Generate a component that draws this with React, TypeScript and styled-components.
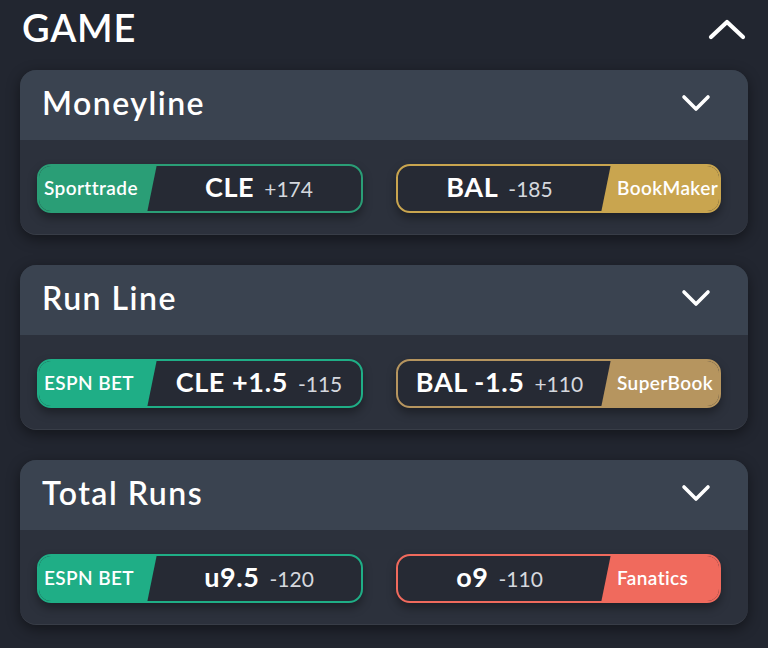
import React from "react";
import styled, { createGlobalStyle } from "styled-components";

const Global = createGlobalStyle`
  html, body { margin: 0; padding: 0; background: #222630; }
  body { font-family: Lato, "Noto Sans", sans-serif; color: #fff; }
  * { box-sizing: border-box; }
`;

const Page = styled.div`
  width: 768px;
  height: 648px;
  overflow: hidden;
  background: #222630;
  padding: 0 20px;
  display: flex;
  flex-direction: column;
`;

const TopBar = styled.div`
  height: 70px;
  display: flex;
  align-items: flex-start;
  justify-content: space-between;
  padding: 5px 1px 0 2px;
`;

const PageTitle = styled.h1`
  margin: 0;
  font-size: 38px;
  font-weight: 600;
  letter-spacing: 0.8px;
  line-height: 44px;
`;

const TopChevron = styled.svg`
  width: 40px;
  height: 24px;
  margin-top: 12px;
`;

const Cards = styled.div`
  display: flex;
  flex-direction: column;
  gap: 30px;
`;

const Card = styled.section`
  border-radius: 16px;
  overflow: hidden;
  background: #2c313c;
  box-shadow: 0 4px 14px rgba(0, 0, 0, 0.45), inset 0 -1px 0 rgba(255,255,255,0.06);
`;

const CardHeader = styled.div`
  height: 70px;
  background: #3a4350;
  display: flex;
  align-items: center;
  justify-content: space-between;
  padding: 0 36px 6px 22px;
`;

const CardTitle = styled.h2`
  margin: 0;
  font-size: 32px;
  font-weight: 600;
  letter-spacing: 1.5px;
`;

const HeaderChevron = styled.svg`
  width: 32px;
  height: 20px;
  margin-top: 2px;
`;

const CardBody = styled.div`
  height: 95px;
  display: grid;
  grid-template-columns: 326px 325px;
  column-gap: 33px;
  align-content: start;
  padding: 24px 27px 0 17px;
`;

const Pick = styled.div<{ $c: string }>`
  height: 49px;
  border: 2px solid ${(p) => p.$c};
  border-radius: 14px;
  background: #262a34;
  overflow: hidden;
  display: flex;
  align-items: stretch;
  box-shadow: 0 5px 10px rgba(0, 0, 0, 0.35);
`;

const Book = styled.div<{ $c: string; $side: "left" | "right" }>`
  width: 120px;
  flex: none;
  margin: -2px;
  background: ${(p) => p.$c};
  display: flex;
  align-items: center;
  padding-bottom: 2px;
  font-size: 19px;
  font-weight: 600;
  letter-spacing: 0.4px;
  color: #fff;
  white-space: nowrap;
  ${(p) =>
    p.$side === "left"
      ? `clip-path: polygon(0 0, 100% 0, calc(100% - 10px) 100%, 0 100%); padding-left: 7px; margin-right: 0;`
      : `clip-path: polygon(10px 0, 100% 0, 100% 100%, 0 100%); padding-left: 16px; margin-left: 0;`}
`;

const Line = styled.div`
  flex: 1;
  display: flex;
  align-items: baseline;
  justify-content: center;
  align-self: center;
  gap: 10px;
  margin-top: -4px;
  white-space: nowrap;
`;

const Main = styled.span`
  font-size: 27px;
  font-weight: 700;
  letter-spacing: 0.6px;
  color: #fff;
`;

const Odds = styled.span`
  font-size: 21px;
  font-weight: 400;
  color: #d5d8de;
`;

type Side = { book: string; color: string; main: string; odds: string };
type Market = { title: string; left: Side; right: Side };

const markets: Market[] = [
  {
    title: "Moneyline",
    left: { book: "Sporttrade", color: "#2a9e76", main: "CLE", odds: "+174" },
    right: { book: "BookMaker", color: "#c9a54f", main: "BAL", odds: "-185" },
  },
  {
    title: "Run Line",
    left: { book: "ESPN BET", color: "#1fae86", main: "CLE +1.5", odds: "-115" },
    right: { book: "SuperBook", color: "#b6955f", main: "BAL -1.5", odds: "+110" },
  },
  {
    title: "Total Runs",
    left: { book: "ESPN BET", color: "#1fae86", main: "u9.5", odds: "-120" },
    right: { book: "Fanatics", color: "#f06a5d", main: "o9", odds: "-110" },
  },
];

const Chevron = ({ up }: { up?: boolean }) => (
  <path
    d={up ? "M4 20 L20 5 L36 20" : "M4 4 L16 16 L28 4"}
    fill="none"
    stroke="#fff"
    strokeWidth={up ? 4.2 : 3.6}
    strokeLinecap="round"
    strokeLinejoin="round"
  />
);

export default function App() {
  return (
    <>
      <Global />
      <Page>
        <TopBar>
          <PageTitle>GAME</PageTitle>
          <TopChevron viewBox="0 0 40 24">
            <Chevron up />
          </TopChevron>
        </TopBar>
        <Cards>
          {markets.map((m) => (
            <Card key={m.title}>
              <CardHeader>
                <CardTitle>{m.title}</CardTitle>
                <HeaderChevron viewBox="0 0 32 20">
                  <Chevron />
                </HeaderChevron>
              </CardHeader>
              <CardBody>
                <Pick $c={m.left.color}>
                  <Book $c={m.left.color} $side="left">
                    {m.left.book}
                  </Book>
                  <Line>
                    <Main>{m.left.main}</Main>
                    <Odds>{m.left.odds}</Odds>
                  </Line>
                </Pick>
                <Pick $c={m.right.color}>
                  <Line>
                    <Main>{m.right.main}</Main>
                    <Odds>{m.right.odds}</Odds>
                  </Line>
                  <Book $c={m.right.color} $side="right">
                    {m.right.book}
                  </Book>
                </Pick>
              </CardBody>
            </Card>
          ))}
        </Cards>
      </Page>
    </>
  );
}
